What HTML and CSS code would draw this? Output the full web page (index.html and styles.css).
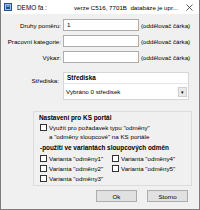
FILE: index.html
```html
<!DOCTYPE html>
<html>
<head>
<meta charset="utf-8">
<link rel="stylesheet" href="styles.css">
</head>
<body>
<div class="window">
  <div class="titlebar">
    <svg class="appicon" width="8" height="8" viewBox="0 0 8 8"><rect x="0" y="0" width="8" height="8" fill="#1f4e9c"/><rect x="1.5" y="1.5" width="5" height="5" fill="none" stroke="#9fc3f0" stroke-width="1"/><rect x="2.5" y="2.5" width="3" height="1" fill="#dbe9fb"/></svg>
    <span class="title-left">DEMO fa :</span>
    <span class="title-right">verze C516, 7701B&nbsp;&nbsp;databáze je upr...</span>
    <svg class="close" width="7" height="7" viewBox="0 0 7 7"><path d="M0.5 0.5 L6.5 6.5 M6.5 0.5 L0.5 6.5" stroke="#333" stroke-width="0.8"/></svg>
  </div>
  <div class="content">
    <div class="form">
      <label class="lbl">Druhy poměru:</label><div class="input">1</div><span class="note">(oddělovač čárka)</span>
      <label class="lbl">Pracovní kategorie:</label><div class="input"></div><span class="note">(oddělovač čárka)</span>
      <label class="lbl">Výkaz:</label><div class="input"></div><span class="note">(oddělovač čárka)</span>
    </div>
    <div class="strediska-row">
      <label class="lbl lbl-s">Střediska:</label>
      <div class="spanel">
        <div class="shead">Střediska</div>
        <div class="combo"><span>Vybráno 0 středisek</span><span class="cbtn">▾</span></div>
      </div>
    </div>
    <div class="group">
      <div class="gtitle">Nastavení pro KS portál</div>
      <div class="chk-row wrap"><span class="cb"></span><span>Využít pro požadavek typu "odměny"<br>a "odměny sloupcové" na KS portále</span></div>
      <div class="subhead">-použití ve variantách sloupcových odměn</div>
      <div class="variants">
        <div class="chk-row"><span class="cb"></span><span>Varianta "odměny1"</span></div>
        <div class="chk-row"><span class="cb"></span><span>Varianta "odměny4"</span></div>
        <div class="chk-row"><span class="cb"></span><span>Varianta "odměny2"</span></div>
        <div class="chk-row"><span class="cb"></span><span>Varianta "odměny5"</span></div>
        <div class="chk-row"><span class="cb"></span><span>Varianta "odměny3"</span></div>
      </div>
    </div>
    <div class="buttons">
      <button class="btn">Ok</button>
      <button class="btn">Storno</button>
    </div>
  </div>
</div>
</body>
</html>
```
FILE: styles.css
```css
* { box-sizing: border-box; }
html, body { margin: 0; padding: 0; }
body {
  font-family: "Liberation Sans", Arial, sans-serif;
  font-size: 6.2px;
  color: #000;
  background: #fff;
}
.window {
  width: 200px;
  height: 210px;
  background: #f0f0f0;
  border: 1px solid #7d7d7d;
  border-top: 0;
  display: flex;
  flex-direction: column;
}
.titlebar {
  height: 14px;
  background: #fff;
  display: flex;
  align-items: center;
  padding-left: 3px;
  padding-right: 6px;
  flex-shrink: 0;
  white-space: nowrap;
}
.appicon { margin-right: 5px; flex-shrink: 0; }
.title-left { font-size: 6.4px; width: 57px; flex-shrink: 0; }
.title-right { font-size: 6.2px; }
.close { margin-left: auto; flex-shrink: 0; }
.content {
  flex: 1;
  display: flex;
  flex-direction: column;
}
.form {
  display: grid;
  grid-template-columns: 60px 76px auto;
  column-gap: 2px;
  row-gap: 4px;
  margin-top: 5px;
  align-items: center;
}
.lbl { text-align: right; white-space: nowrap; }
.input {
  height: 12px;
  background: #fff;
  border: 1px solid #adadad;
  padding-left: 3px;
  line-height: 10px;
}
.note { white-space: nowrap; }
.strediska-row {
  display: flex;
  margin-top: 9px;
  align-items: flex-start;
}
.lbl-s { width: 58px; padding-top: 5px; }
.spanel {
  margin-left: 4px;
  width: 126px;
  height: 28px;
  border: 1px solid #d6d6d6;
  background: #fff;
  display: flex;
  flex-direction: column;
}
.shead {
  height: 11px;
  font-weight: bold;
  font-size: 6.4px;
  padding-left: 3px;
  line-height: 9px;
  border-bottom: 1px solid #e6e6e6;
}
.combo {
  flex: 1;
  display: flex;
  align-items: center;
  justify-content: space-between;
  padding-left: 2px;
  padding-right: 1px;
}
.cbtn {
  width: 9px;
  height: 10px;
  background: #e9e9e9;
  border: 1px solid #cfcfcf;
  font-size: 5px;
  display: flex;
  align-items: center;
  justify-content: center;
}
.group {
  margin-top: 11px;
  margin-left: 32px;
  width: 159px;
  height: 75px;
  border: 1px solid #dcdcdc;
  padding: 1px 0 0 6px;
}
.gtitle {
  font-weight: bold;
  font-size: 6.4px;
  margin-left: -1px;
  height: 9px;
  line-height: 9px;
  margin-bottom: 1px;
}
.chk-row {
  display: flex;
  align-items: center;
  gap: 2px;
  white-space: nowrap;
  height: 10px;
}
.chk-row.wrap { align-items: flex-start; height: auto; line-height: 9px; }
.chk-row.wrap .cb { margin-top: 1px; }
.cb {
  width: 7px;
  height: 7px;
  background: #fff;
  border: 1px solid #333;
  flex-shrink: 0;
}
.subhead {
  font-weight: bold;
  font-size: 6.4px;
  margin-top: 2px;
  height: 9px;
  line-height: 9px;
}
.variants {
  display: grid;
  grid-template-columns: 72px auto;
  margin-top: 1px;
  row-gap: 0;
}
.buttons {
  display: flex;
  justify-content: flex-end;
  gap: 10px;
  margin-top: 4px;
  padding-right: 11px;
}
.btn {
  width: 41px;
  height: 12px;
  background: #e1e1e1;
  border: 1px solid #adadad;
  font-family: "Liberation Sans", Arial, sans-serif;
  font-size: 6.2px;
  padding: 0;
  color: #000;
}
```
